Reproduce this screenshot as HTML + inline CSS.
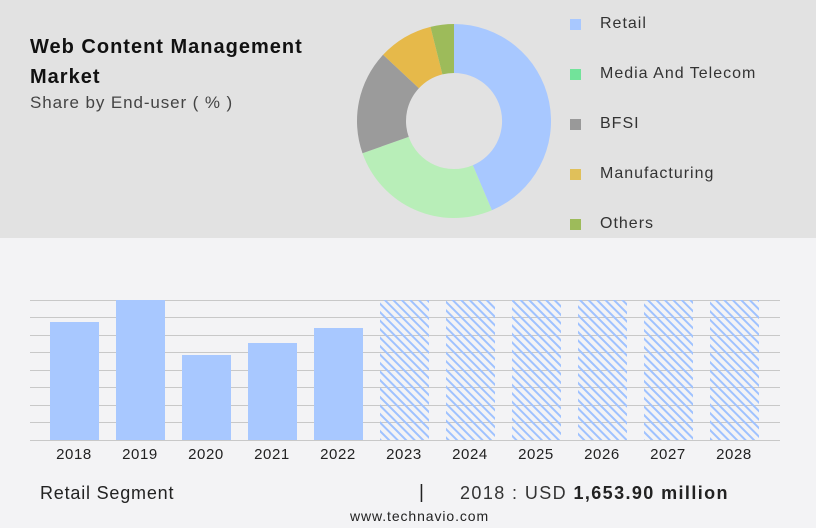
<!DOCTYPE html>
<html><head><meta charset="utf-8"><style>
body{margin:0;width:816px;height:528px;background:#f3f3f5;font-family:"Liberation Sans",sans-serif;position:relative;overflow:hidden}
.top{position:absolute;left:0;top:0;width:816px;height:238px;background:#e2e2e2}
.t{position:absolute;color:#222;white-space:nowrap}
.lg{position:absolute;left:570px;width:11px;height:11px}
.lt{position:absolute;left:600px;font-size:16px;color:#333;letter-spacing:1px}
.yr{position:absolute;top:446px;font-size:15px;color:#222;width:60px;text-align:center;letter-spacing:0.6px}
</style></head><body>
<div class="top"></div>
<div class="t" style="left:30px;top:32px;font-size:20px;font-weight:bold;line-height:30px;color:#111;letter-spacing:1px">Web Content Management<br>Market</div>
<div class="t" style="left:30px;top:93px;font-size:17px;color:#444;letter-spacing:0.9px">Share by End-user ( % )</div>
<svg style="position:absolute;left:0;top:0" width="816" height="238">
<path d="M454 24A97 97 0 0 1 491.9 210.3L472.8 165.2A48 48 0 0 0 454 73Z" fill="#a8c8ff"/>
<path d="M491.9 210.3A97 97 0 0 1 362.5 153.2L408.7 136.9A48 48 0 0 0 472.8 165.2Z" fill="#b8eeb8"/>
<path d="M362.5 153.2A97 97 0 0 1 383.1 54.8L418.9 88.3A48 48 0 0 0 408.7 136.9Z" fill="#9b9b9b"/>
<path d="M383.1 54.8A97 97 0 0 1 430.5 26.9L442.4 74.4A48 48 0 0 0 418.9 88.3Z" fill="#e6b94a"/>
<path d="M430.5 26.9A97 97 0 0 1 454 24L454 73A48 48 0 0 0 442.4 74.4Z" fill="#9dbb5a"/>
</svg>
<div class="lg" style="top:19px;background:#a8c8ff"></div><div class="lt" style="top:15px">Retail</div>
<div class="lg" style="top:69px;background:#72e39a"></div><div class="lt" style="top:65px">Media And Telecom</div>
<div class="lg" style="top:119px;background:#999"></div><div class="lt" style="top:115px">BFSI</div>
<div class="lg" style="top:169px;background:#e0c05a"></div><div class="lt" style="top:165px">Manufacturing</div>
<div class="lg" style="top:219px;background:#9dbb5a"></div><div class="lt" style="top:215px">Others</div>
<svg style="position:absolute;left:0;top:290px" width="816" height="160">
<defs><pattern id="h" width="6" height="6" patternUnits="userSpaceOnUse" patternTransform="rotate(-45)"><rect x="0" y="0" width="2" height="6" fill="#9fc2ff"/></pattern></defs>
<g stroke="#c8c8c8" stroke-width="1">
<line x1="30" x2="780" y1="10.5" y2="10.5"/><line x1="30" x2="780" y1="27.5" y2="27.5"/><line x1="30" x2="780" y1="45.5" y2="45.5"/><line x1="30" x2="780" y1="62.5" y2="62.5"/><line x1="30" x2="780" y1="80.5" y2="80.5"/><line x1="30" x2="780" y1="97.5" y2="97.5"/><line x1="30" x2="780" y1="115.5" y2="115.5"/><line x1="30" x2="780" y1="132.5" y2="132.5"/><line x1="30" x2="780" y1="150.5" y2="150.5"/>
</g>
<g fill="#a8c8ff">
<rect x="50" y="32" width="49" height="118"/><rect x="116" y="10" width="49" height="140"/><rect x="182" y="65" width="49" height="85"/><rect x="248" y="53" width="49" height="97"/><rect x="314" y="38" width="49" height="112"/>
</g>
<g fill="url(#h)">
<rect x="380" y="10" width="49" height="140"/><rect x="446" y="10" width="49" height="140"/><rect x="512" y="10" width="49" height="140"/><rect x="578" y="10" width="49" height="140"/><rect x="644" y="10" width="49" height="140"/><rect x="710" y="10" width="49" height="140"/>
</g>
</svg>
<div class="yr" style="left:44px">2018</div><div class="yr" style="left:110px">2019</div><div class="yr" style="left:176px">2020</div><div class="yr" style="left:242px">2021</div><div class="yr" style="left:308px">2022</div><div class="yr" style="left:374px">2023</div><div class="yr" style="left:440px">2024</div><div class="yr" style="left:506px">2025</div><div class="yr" style="left:572px">2026</div><div class="yr" style="left:638px">2027</div><div class="yr" style="left:704px">2028</div>
<div class="t" style="left:40px;top:483px;font-size:18px;letter-spacing:0.8px">Retail Segment</div>
<div class="t" style="left:419px;top:482px;font-size:19px">|</div>
<div class="t" style="left:460px;top:483px;font-size:18px;color:#333;letter-spacing:1.4px">2018 : USD <b style="color:#222">1,653.90 million</b></div>
<div class="t" style="left:350px;top:508px;font-size:14px;letter-spacing:0.9px">www.technavio.com</div>
</body></html>
